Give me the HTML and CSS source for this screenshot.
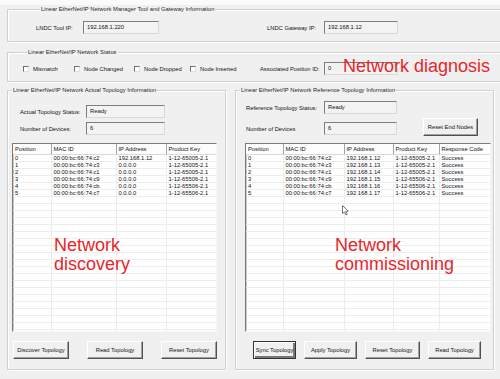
FILE: index.html
```html
<!DOCTYPE html>
<html lang="en">
<head>
  <meta charset="UTF-8" />
  <meta name="viewport" content="width=device-width, initial-scale=1.0"/>
  <title>Linear EtherNet/IP Network Manager</title>
  <link rel="stylesheet" href="styles.css">
</head>
<body>

<div class="strip"></div>

<fieldset class="group group-info">
  <legend>Linear EtherNet/IP Network Manager Tool and Gateway Information</legend>
  <div class="row">
    <span class="lbl lbl-tool">LNDC Tool IP:</span>
    <span class="textbox tb-tool">192.168.1.220</span>
    <span class="lbl lbl-gw">LNDC Gateway IP:</span>
    <span class="textbox tb-gw">192.168.1.12</span>
  </div>
</fieldset>

<fieldset class="group group-status">
  <legend>Linear EtherNet/IP Network Status</legend>
  <div class="row">
    <label class="check chk-1"><span class="box"></span>Mismatch</label>
    <label class="check chk-2"><span class="box"></span>Node Changed</label>
    <label class="check chk-3"><span class="box"></span>Node Dropped</label>
    <label class="check chk-4"><span class="box"></span>Node Inserted</label>
    <span class="lbl lbl-assoc">Associated Position ID:</span>
    <span class="textbox tb-gw">0</span>
  </div>
</fieldset>

<div class="panels">
  <fieldset class="group panel panel-actual">
    <legend>Linear EtherNet/IP Network Actual Topology Information</legend>
    <div class="panel-body">
      <div class="fields fields-actual">
        <span class="lbl">Actual Topology Status:</span>
        <span class="textbox">Ready</span>
        <span class="lbl">Number of Devices:</span>
        <span class="textbox">6</span>
      </div>

      <div class="list list-actual">
        <table>
          <colgroup><col style="width:38px"><col style="width:65px"><col style="width:50px"><col style="width:52px"></colgroup>
          <thead>
            <tr><th>Position</th><th>MAC ID</th><th>IP Address</th><th>Product Key</th></tr>
          </thead>
          <tbody>
            <tr><td>0</td><td>00:00:bc:66:74:c2</td><td>192.168.1.12</td><td>1-12-65005-2.1</td></tr>
            <tr><td>1</td><td>00:00:bc:66:74:c3</td><td>0.0.0.0</td><td>1-12-65005-2.1</td></tr>
            <tr><td>2</td><td>00:00:bc:66:74:c1</td><td>0.0.0.0</td><td>1-12-65005-2.1</td></tr>
            <tr><td>3</td><td>00:00:bc:66:74:c9</td><td>0.0.0.0</td><td>1-12-65506-2.1</td></tr>
            <tr><td>4</td><td>00:00:bc:66:74:cb</td><td>0.0.0.0</td><td>1-12-65506-2.1</td></tr>
            <tr><td>5</td><td>00:00:bc:66:74:c7</td><td>0.0.0.0</td><td>1-12-65506-2.1</td></tr>
            <tr><td></td><td></td><td></td><td></td></tr>
            <tr><td></td><td></td><td></td><td></td></tr>
            <tr><td></td><td></td><td></td><td></td></tr>
            <tr><td></td><td></td><td></td><td></td></tr>
            <tr><td></td><td></td><td></td><td></td></tr>
            <tr><td></td><td></td><td></td><td></td></tr>
            <tr><td></td><td></td><td></td><td></td></tr>
            <tr><td></td><td></td><td></td><td></td></tr>
            <tr><td></td><td></td><td></td><td></td></tr>
            <tr><td></td><td></td><td></td><td></td></tr>
            <tr><td></td><td></td><td></td><td></td></tr>
            <tr><td></td><td></td><td></td><td></td></tr>
            <tr><td></td><td></td><td></td><td></td></tr>
            <tr><td></td><td></td><td></td><td></td></tr>
            <tr><td></td><td></td><td></td><td></td></tr>
            <tr><td></td><td></td><td></td><td></td></tr>
            <tr><td></td><td></td><td></td><td></td></tr>
            <tr><td></td><td></td><td></td><td></td></tr>
            <tr><td></td><td></td><td></td><td></td></tr>
            <tr><td></td><td></td><td></td><td></td></tr>
          </tbody>
        </table>
      </div>

      <div class="buttons buttons-actual">
        <button class="button">Discover Topology</button>
        <button class="button">Read Topology</button>
        <button class="button">Reset Topology</button>
      </div>
    </div>
  </fieldset>

  <fieldset class="group panel panel-ref">
    <legend>Linear EtherNet/IP Network Reference Topology Information</legend>
    <div class="panel-body">
      <div class="fields fields-ref">
        <span class="lbl">Reference Topology Status:</span>
        <span class="textbox">Ready</span>
        <span class="lbl">Number of Devices</span>
        <span class="textbox">6</span>
        <button class="button btn-endnodes">Reset End Nodes</button>
      </div>

      <div class="list list-ref">
        <table>
          <colgroup><col style="width:37px"><col style="width:61px"><col style="width:49px"><col style="width:46px"><col style="width:53px"></colgroup>
          <thead>
            <tr><th>Position</th><th>MAC ID</th><th>IP Address</th><th>Product Key</th><th>Response Code</th></tr>
          </thead>
          <tbody>
            <tr><td>0</td><td>00:00:bc:66:74:c2</td><td>192.168.1.12</td><td>1-12-65005-2.1</td><td>Success</td></tr>
            <tr><td>1</td><td>00:00:bc:66:74:c3</td><td>192.168.1.13</td><td>1-12-65005-2.1</td><td>Success</td></tr>
            <tr><td>2</td><td>00:00:bc:66:74:c1</td><td>192.168.1.14</td><td>1-12-65005-2.1</td><td>Success</td></tr>
            <tr><td>3</td><td>00:00:bc:66:74:c9</td><td>192.168.1.15</td><td>1-12-65506-2.1</td><td>Success</td></tr>
            <tr><td>4</td><td>00:00:bc:66:74:cb</td><td>192.168.1.16</td><td>1-12-65506-2.1</td><td>Success</td></tr>
            <tr><td>5</td><td>00:00:bc:66:74:c7</td><td>192.168.1.17</td><td>1-12-65506-2.1</td><td>Success</td></tr>
            <tr><td></td><td></td><td></td><td></td><td></td></tr>
            <tr><td></td><td></td><td></td><td></td><td></td></tr>
            <tr><td></td><td></td><td></td><td></td><td></td></tr>
            <tr><td></td><td></td><td></td><td></td><td></td></tr>
            <tr><td></td><td></td><td></td><td></td><td></td></tr>
            <tr><td></td><td></td><td></td><td></td><td></td></tr>
            <tr><td></td><td></td><td></td><td></td><td></td></tr>
            <tr><td></td><td></td><td></td><td></td><td></td></tr>
            <tr><td></td><td></td><td></td><td></td><td></td></tr>
            <tr><td></td><td></td><td></td><td></td><td></td></tr>
            <tr><td></td><td></td><td></td><td></td><td></td></tr>
            <tr><td></td><td></td><td></td><td></td><td></td></tr>
            <tr><td></td><td></td><td></td><td></td><td></td></tr>
            <tr><td></td><td></td><td></td><td></td><td></td></tr>
            <tr><td></td><td></td><td></td><td></td><td></td></tr>
            <tr><td></td><td></td><td></td><td></td><td></td></tr>
            <tr><td></td><td></td><td></td><td></td><td></td></tr>
            <tr><td></td><td></td><td></td><td></td><td></td></tr>
            <tr><td></td><td></td><td></td><td></td><td></td></tr>
            <tr><td></td><td></td><td></td><td></td><td></td></tr>
          </tbody>
        </table>
      </div>

      <div class="buttons buttons-ref">
        <button class="button btn-default btn-sync">Sync Topology</button>
        <button class="button btn-apply">Apply Topology</button>
        <button class="button btn-reset">Reset Topology</button>
        <button class="button btn-read">Read Topology</button>
      </div>
    </div>
  </fieldset>
</div>

<!-- annotations drawn over the screenshot -->
<div class="note note-diag">Network diagnosis</div>
<div class="note note-disc">Network<br>discovery</div>
<div class="note note-comm">Network<br>commissioning</div>

<svg class="cursor" width="7" height="11" viewBox="0 0 7 11">
  <path d="M0.5 0.5 L0.5 8.5 L2.5 6.8 L4 10 L5.2 9.4 L3.8 6.3 L6.3 6.3 Z" fill="#fff" stroke="#555" stroke-width="0.8" stroke-linejoin="round"/>
</svg>

</body>
</html>
```

FILE: styles.css
```css
body {
  margin: 0;
  background-color: #f0f0f0;
  font-family: "Liberation Sans", Arial, sans-serif;
  font-size: 5.8px;
  color: #111;
  position: relative;
  height: 379px;
  overflow: hidden;
}
.strip {
  height: 5px;
  background-color: #fbfbfb;
}
.group {
  margin: 0;
  padding: 0;
  min-width: 0;
  border: 1px solid #d0d0d0;
  box-shadow: inset 1px 1px 0 #fff, 1px 1px 0 #fff;
}
.group legend {
  margin-left: 4px;
  padding: 0 1px;
  height: 8px;
  line-height: 8px;
  color: #222;
}
.row {
  display: flex;
  align-items: center;
  height: 13px;
}
.group-info {
  margin: 0 -10px 0 7px;
  padding: 8px 0 7px 28px;
}
.group-status {
  margin: 6px -10px 0 7px;
  padding: 6px 0 6px 15px;
}
.lbl {
  white-space: nowrap;
}
.lbl-tool { width: 47px; }
.lbl-gw { width: 57px; margin-left: 108px; }
.lbl-assoc { width: 64px; }
.textbox {
  display: block;
  box-sizing: border-box;
  height: 13px;
  line-height: 11px;
  padding: 0 3px;
  border: 1px solid;
  border-color: #7e7e7e #d8d8d8 #d8d8d8 #7e7e7e;
  background-color: #f3f3f3;
  white-space: nowrap;
}
.tb-tool { width: 76px; }
.tb-gw { width: 74px; }

.check {
  display: flex;
  align-items: center;
}
.check .box {
  width: 6px;
  height: 6px;
  box-sizing: border-box;
  border: 1px solid;
  border-color: #6e6e6e #e0e0e0 #e0e0e0 #6e6e6e;
  background-color: #fff;
  margin-right: 4px;
}
.chk-1 { width: 51px; }
.chk-2 { width: 60px; }
.chk-3 { width: 56px; }
.chk-4 { width: 70px; }

.panels {
  display: flex;
  gap: 9px;
  margin-top: 4px;
  padding-left: 7px;
}
.panel {
  box-sizing: border-box;
  height: 284px;
}
.panel-actual { width: 219px; }
.panel-ref { width: 259px; }
.panel .panel-body {
  display: flex;
  flex-direction: column;
}
.fields {
  display: grid;
  align-items: center;
  grid-template-rows: 13px 13px;
}
.fields-actual {
  grid-template-columns: 66px 79px;
  row-gap: 4px;
  margin: 11px 0 8px 12px;
}
.fields-ref {
  grid-template-columns: 78px 73px auto;
  row-gap: 8px;
  margin: 7px 0 8px 10px;
}
.btn-endnodes {
  grid-column: 3;
  grid-row: 1 / 3;
  align-self: end;
  width: 55px;
  height: 19px;
  margin: 0 0 -1px 26px;
}

.list {
  box-sizing: border-box;
  height: 189px;
  overflow: hidden;
  background-color: #fff;
  border: 1px solid;
  border-color: #7a7a7a #f6f6f6 #f6f6f6 #7a7a7a;
  box-shadow: inset 1px 1px 0 #c4c4c4;
}
.list-actual { width: 205px; margin-left: 4px; }
.list-ref { width: 246px; margin-left: 9px; }
.list table {
  width: 100%;
  border-collapse: collapse;
  table-layout: fixed;
}
.list th {
  height: 10px;
  padding: 0 2px;
  font-weight: normal;
  text-align: left;
  color: #111;
  background-color: #fdfdfd;
  border-right: 1px solid #a4a4a4;
  border-bottom: 1px solid #d8d8d8;
  white-space: nowrap;
  overflow: hidden;
}
.list td {
  height: 6px;
  padding: 0 2px;
  line-height: 6px;
  border-right: 1px solid #ededed;
  border-bottom: 1px solid #ededed;
  white-space: nowrap;
  overflow: hidden;
}

.buttons {
  display: flex;
  justify-content: space-between;
  margin-top: 9px;
}
.buttons-actual { padding: 0 8px 0 5px; }
.buttons-ref { padding: 0 12px 0 17px; }
.button {
  box-sizing: border-box;
  height: 18px;
  padding: 0;
  font-family: inherit;
  font-size: 5.8px;
  color: #111;
  background-color: #f0f0f0;
  border: 1px solid;
  border-color: #fff #505050 #505050 #fff;
  box-shadow: inset -1px -1px 0 #a0a0a0;
  white-space: nowrap;
}
.buttons-actual .button { width: 56px; }
.btn-default {
  border-color: #333;
  box-shadow: inset 1px 1px 0 #fff, inset -2px -2px 0 #777;
}
.btn-sync { width: 43px; }
.btn-apply { width: 53px; }
.btn-reset { width: 55px; }
.btn-read { width: 53px; }

.note {
  position: absolute;
  font-family: "Liberation Sans", Arial, sans-serif;
  font-size: 18px;
  line-height: 19px;
  color: #e8262a;
  white-space: nowrap;
}
.note-diag { left: 343px; top: 57px; }
.note-disc { left: 54px; top: 236px; }
.note-comm { left: 335px; top: 236px; }
.cursor {
  position: absolute;
  left: 342px;
  top: 205px;
}
```
